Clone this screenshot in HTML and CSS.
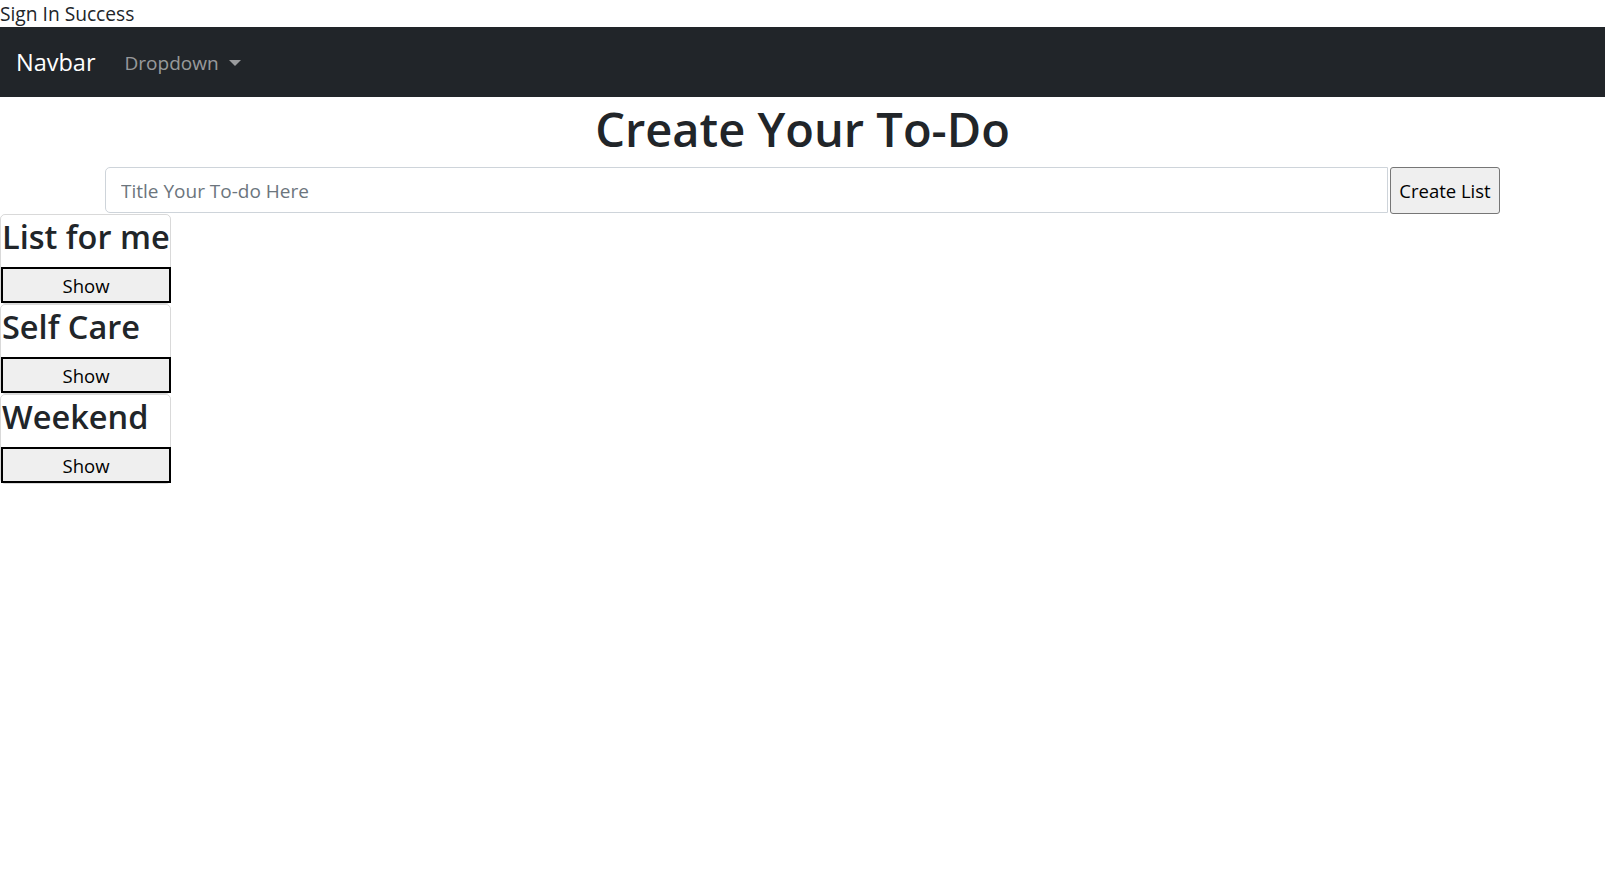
FILE: index.html
```html
<!DOCTYPE html>
<html lang="en">
<head>
<meta charset="utf-8">
<title>To-Do</title>
<link rel="stylesheet" href="styles.css">
</head>
<body>
<div class="status">Sign In Success</div>
<nav class="navbar">
  <a class="brand" href="#">Navbar</a>
  <a class="dropdown" href="#">Dropdown<span class="caret"></span></a>
</nav>
<h1 class="title">Create Your To-Do</h1>
<form class="create">
  <input class="create-input" type="text" placeholder="Title Your To-do Here">
  <button class="create-btn" type="button">Create List</button>
</form>
<div class="lists">
  <div class="card">
    <h3 class="card-title">List for me</h3>
    <button class="show-btn" type="button">Show</button>
  </div>
  <div class="card">
    <h3 class="card-title">Self Care</h3>
    <button class="show-btn" type="button">Show</button>
  </div>
  <div class="card">
    <h3 class="card-title">Weekend</h3>
    <button class="show-btn" type="button">Show</button>
  </div>
</div>
</body>
</html>
```
FILE: styles.css
```css
* { box-sizing: border-box; }
html, body { margin: 0; padding: 0; }
body {
  font-family: "Open Sans", "Noto Sans", sans-serif;
  font-size: 19px;
  color: #212529;
  background: #fff;
}
.status {
  height: 27px;
  line-height: 27px;
  font-size: 19.2px;
  white-space: nowrap;
}
.navbar {
  height: 70px;
  background: #212529;
  display: flex;
  align-items: center;
  padding: 0 16px;
}
.brand {
  color: #fff;
  text-decoration: none;
  font-size: 23.5px;
  margin-right: 19px;
  padding-bottom: 1px;
}
.dropdown {
  color: rgba(255,255,255,0.55);
  text-decoration: none;
  font-size: 19px;
  padding: 0 10px;
  display: flex;
  align-items: center;
  padding-top: 1px;
}
.caret {
  display: inline-block;
  width: 0;
  height: 0;
  margin-left: 10px;
  border-top: 6px solid rgba(255,255,255,0.55);
  border-left: 6px solid transparent;
  border-right: 6px solid transparent;
}
.title {
  margin: 0 0 10px;
  height: 60px;
  line-height: 64px;
  text-align: center;
  font-size: 47px;
  font-weight: 600;
}
.create {
  width: 1395px;
  margin: 0 auto;
  display: flex;
  height: 47px;
}
.create-input {
  flex: 1;
  height: 46px;
  border: 1px solid #ced4da;
  border-radius: 5px 0 0 5px;
  padding: 2px 15px 0;
  font-family: inherit;
  font-size: 19px;
  color: #495057;
}
.create-input::placeholder { color: #6c757d; }
.create-btn {
  width: 110px;
  height: 47px;
  margin-left: 2px;
  background: #efefef;
  border: 1px solid #767676;
  border-radius: 3px;
  font-family: inherit;
  font-size: 18.5px;
  color: #000;
  padding: 0;
}
.lists {
  width: 171px;
  display: flex;
  flex-direction: column;
}
.card {
  height: 90px;
  border: 1px solid rgba(0,0,0,0.15);
  border-radius: 5px;
  display: flex;
  flex-direction: column;
}
.card-title {
  margin: 0;
  height: 52px;
  line-height: 44px;
  font-size: 32.5px;
  font-weight: 600;
  white-space: nowrap;
  padding-left: 1px;
}
.show-btn {
  height: 36px;
  margin: 0 -1px 0 0;
  background: #efefef;
  border: 2.5px solid #000;
  font-family: inherit;
  font-size: 18.5px;
  color: #000;
  padding: 0;
}
```
